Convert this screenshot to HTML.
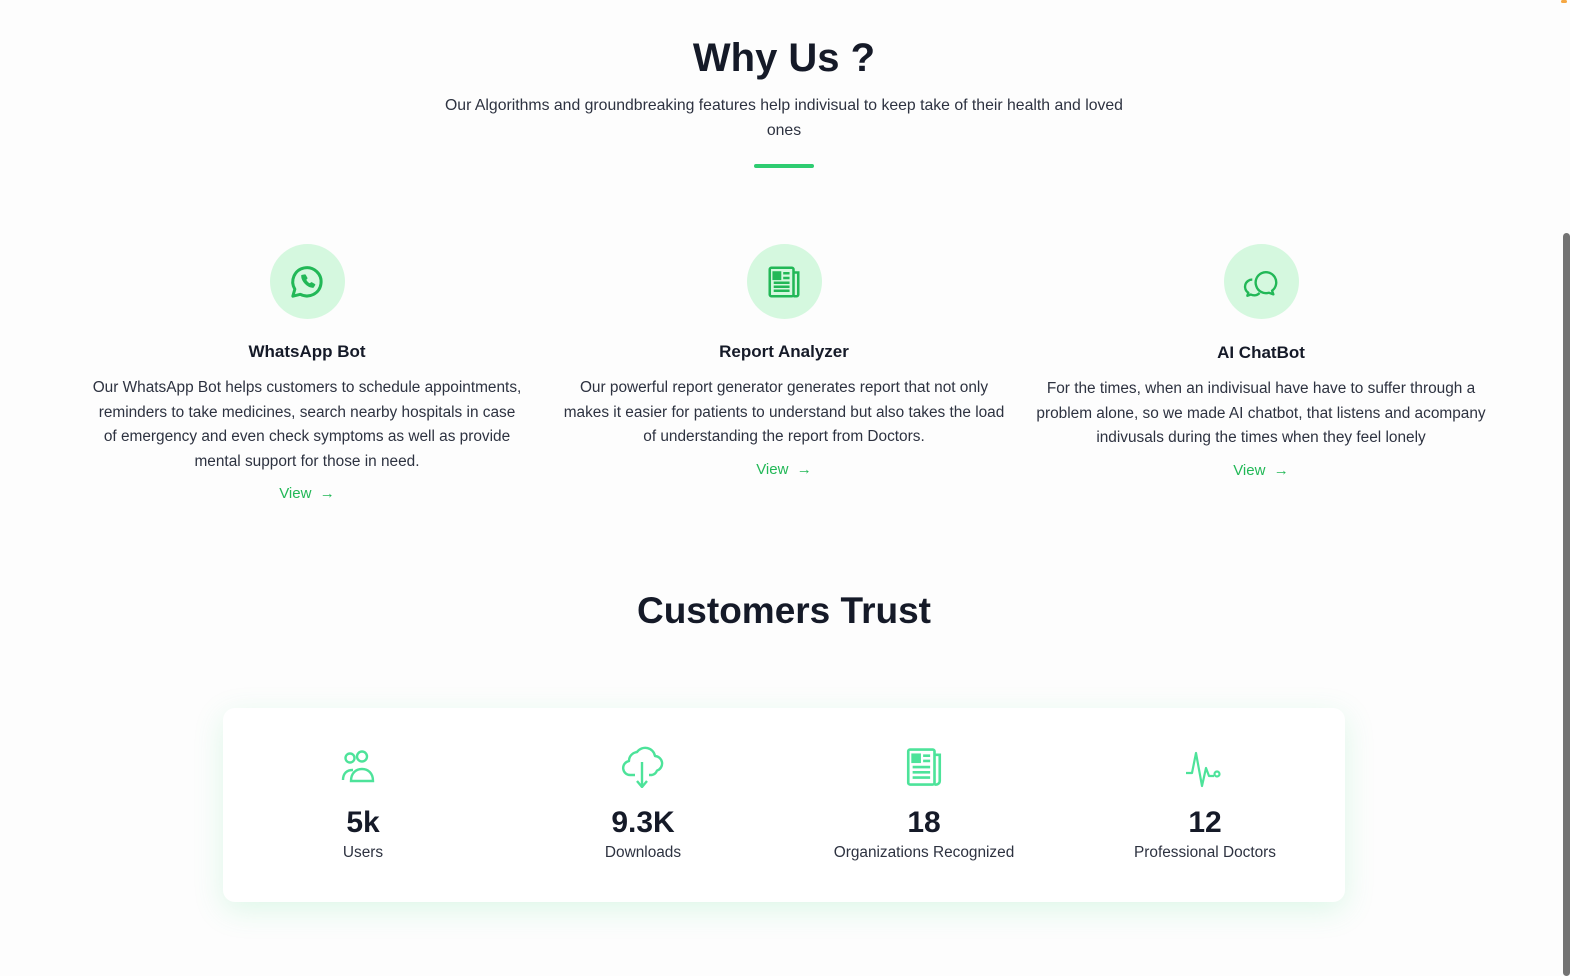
<!DOCTYPE html>
<html><head><meta charset="utf-8"><style>
*{margin:0;padding:0;box-sizing:border-box}
body{width:1570px;height:976px;background:#fdfdfd;font-family:"Liberation Sans",sans-serif;color:#1f2433;position:relative;overflow:hidden}
.abs{position:absolute}
h1{position:absolute;left:0;width:1568px;text-align:center;font-size:40px;font-weight:700;color:#151a28}
.sub{left:434px;width:700px;top:94px;text-align:center;font-size:15.8px;line-height:24.5px;color:#2d3240}
.bar{left:754px;top:164px;width:60px;height:4px;background:#2ecc71;border-radius:2px}
.col{position:absolute;width:450px;text-align:center}
.circ{width:75px;height:75px;border-radius:50%;background:#d5f8df;margin:0 auto;display:flex;align-items:center;justify-content:center}
.col h3{font-size:17px;font-weight:700;color:#151a28;margin-top:23px}
.col p{font-size:15.4px;line-height:24.5px;color:#2d3240;margin-top:14px}
.view{color:#22b857;font-size:15px;margin-top:11px}
.card{left:223px;top:708px;width:1122px;height:194px;background:#fff;border-radius:12px;box-shadow:0 8px 30px rgba(80,220,140,.18)}
.ic{position:absolute;top:746px;width:260px;text-align:center;height:44px}
.n{position:absolute;top:806px;width:260px;text-align:center;font-size:30px;font-weight:700;color:#151a28}
.l{position:absolute;top:844px;width:260px;text-align:center;font-size:15.4px;color:#2d3240}
</style></head><body>
<h1 style="top:36px">Why Us ?</h1>
<div class="abs sub">Our Algorithms and groundbreaking features help indivisual to keep take of their health and loved ones</div>
<div class="abs bar"></div>

<div class="col" style="left:82px;top:244px">
<div class="circ"><svg width="40" height="40" viewBox="0 0 24 24" fill="none" stroke="#22b857" stroke-width="1.8" stroke-linejoin="round"><path d="M3.5 20.5l1.2-4.2A8.5 8.5 0 1 1 8 19.4z"/><path d="M9 8.2c0 3.2 3.4 6.8 6.6 6.8l.9-1.4-1.8-1-1 .8c-1-.4-2.3-1.7-2.7-2.8l.8-.9-1-1.8z" fill="#22b857" stroke-width="1"/></svg></div>
<h3>WhatsApp Bot</h3>
<p style="padding:0 10px">Our WhatsApp Bot helps customers to schedule appointments, reminders to take medicines, search nearby hospitals in case of emergency and even check symptoms as well as provide mental support for those in need.</p>
<div class="view">View &nbsp;→</div>
</div>

<div class="col" style="left:559px;top:244px">
<div class="circ"><svg width="38" height="38" viewBox="0 0 24 24" fill="none" stroke="#22b857" stroke-width="1.6"><rect x="3" y="3" width="15" height="18" rx="1"/><path d="M18 6h3v14a1 1 0 0 1-1 1h-2"/><rect x="5.5" y="6" width="4" height="4" fill="#22b857"/><path d="M11.5 6.5h4M11.5 9.5h4M5.5 12.5h10M5.5 15h10M5.5 17.5h10"/></svg></div>
<h3>Report Analyzer</h3>
<p>Our powerful report generator generates report that not only makes it easier for patients to understand but also takes the load of understanding the report from Doctors.</p>
<div class="view">View &nbsp;→</div>
</div>

<div class="col" style="left:1036px;top:244px">
<div class="circ"><svg width="38" height="38" viewBox="0 0 24 24" fill="none" stroke="#22b857" stroke-width="1.5" stroke-linejoin="round"><path d="M9 14.5A6.5 6.5 0 1 1 19 17.5l.8 2.3-2.8-1A6.5 6.5 0 0 1 9 14.5z"/><path d="M6.5 10.5A4.5 4.5 0 0 0 4 18.8l-.6 1.9 2.2-.8a4.5 4.5 0 0 0 5.5-1"/></svg></div>
<h3 style="margin-top:24px">AI ChatBot</h3>
<p>For the times, when an indivisual have have to suffer through a problem alone, so we made AI chatbot, that listens and acompany indivusals during the times when they feel lonely</p>
<div class="view">View &nbsp;→</div>
</div>

<h1 style="top:590px;font-size:37px">Customers Trust</h1>
<div class="abs card"></div>

<div class="ic" style="left:233px;top:750px"><svg width="44" height="36" viewBox="0 0 44 36" fill="none" stroke="#4de39a" stroke-width="2.4"><circle cx="9" cy="8" r="4.5"/><circle cx="21" cy="6.5" r="5"/><path d="M2 30c0-7 4-10 10-10"/><path d="M10 31c0-8 5-12 11-12s11 4 11 12z"/></svg></div>
<div class="n" style="left:233px">5k</div><div class="l" style="left:233px">Users</div>

<div class="ic" style="left:513px"><svg width="48" height="42" viewBox="0 0 48 42" fill="none" stroke="#4de39a" stroke-width="2.4" stroke-linejoin="round"><path d="M16 29h-5a7 7 0 0 1-1-13.9A9 9 0 0 1 18 6a10 10 0 0 1 18 4a7.5 7.5 0 0 1 2 14.6a7 7 0 0 1-5 4.4h-3"/><path d="M23 16v25M18 35l5 6 5-6"/></svg></div>
<div class="n" style="left:513px">9.3K</div><div class="l" style="left:513px">Downloads</div>

<div class="ic" style="left:794px"><svg width="42" height="42" viewBox="0 0 24 24" fill="none" stroke="#4de39a" stroke-width="1.5"><rect x="3" y="2" width="15" height="20" rx="1"/><path d="M18 5h3v15a2 2 0 0 1-2 2h-1"/><rect x="5.5" y="5" width="4" height="4" fill="#4de39a"/><path d="M11.5 5.5h4M11.5 8.5h4M5.5 12h10M5.5 15h10M5.5 18h10"/></svg></div>
<div class="n" style="left:794px">18</div><div class="l" style="left:794px">Organizations Recognized</div>

<div class="ic" style="left:1075px;top:748px"><svg width="40" height="40" viewBox="0 0 40 40" fill="none" stroke="#4de39a" stroke-width="2.2" stroke-linejoin="round"><path d="M1 25h6l4-20 6 33 4-18 3 8h5"/><circle cx="32" cy="26" r="2.5"/></svg></div>
<div class="n" style="left:1075px">12</div><div class="l" style="left:1075px">Professional Doctors</div>

<div class="abs" style="left:1563px;top:233px;width:7px;height:743px;background:#737373;border-radius:4px"></div>
<div class="abs" style="left:1561px;top:0;width:6px;height:3px;background:#f5a742;border-radius:2px"></div>
</body></html>
